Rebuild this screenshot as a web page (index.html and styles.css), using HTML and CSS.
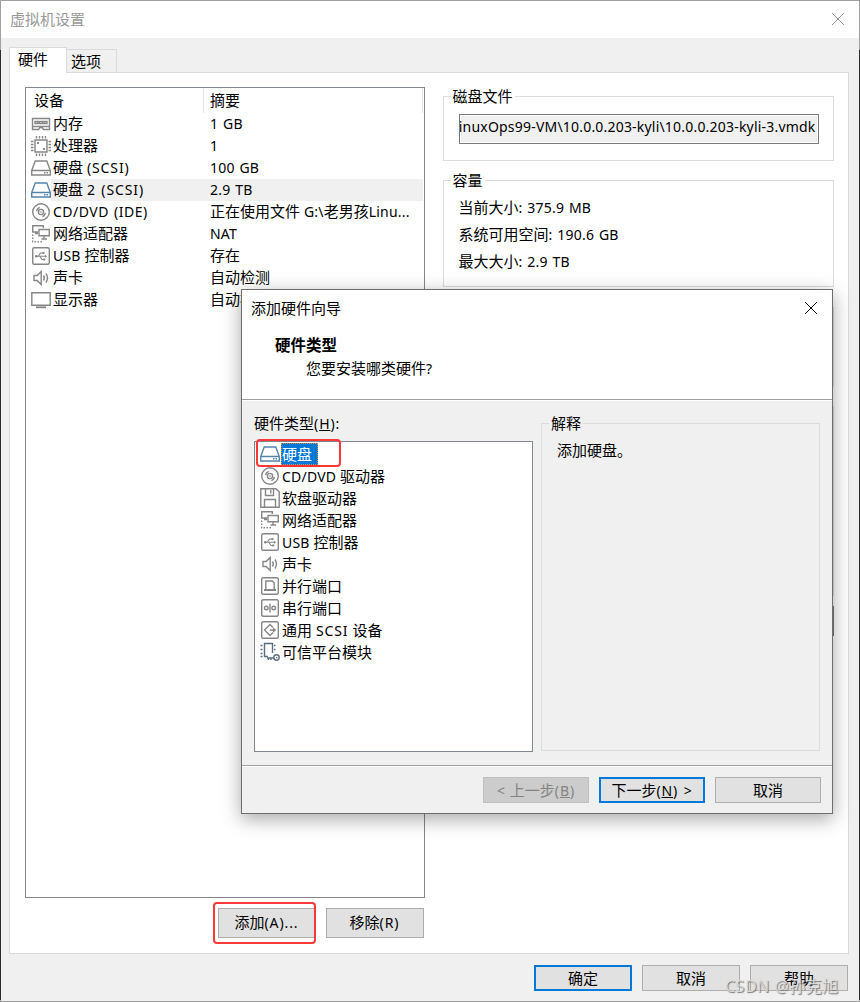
FILE: index.html
```
<!DOCTYPE html>
<html lang="zh-CN">

<head>
    <meta charset="UTF-8">
    <meta name="viewport" content="width=device-width, initial-scale=1.0">
    <title>虚拟机设置</title>
    <link rel="stylesheet" href="styles.css">
</head>

<body>
    <!-- icons used by both lists -->
    <svg class="sprite">
        <symbol id="memory" viewBox="0 0 20 20">
            <path d="M1 4.500h18M1 15.500h6.500l1.500-2h2l1.500 2H19M1 12.500h18M1.500 4v12M18.500 4v12" />
            <path d="M4 7.500h3v2H4zM8.500 7.500h3v2h-3zM13 7.500h3v2h-3z" />
        </symbol>
        <symbol id="cpu" viewBox="0 0 20 20">
            <path d="M4 4h12v12H4z" />
            <path d="M5.500 0v2.500M8.500 0v2.500M11.500 0v2.500M14.500 0v2.500M5.500 17.500V20M8.500 17.500V20M11.500 17.500V20M14.500 17.500V20M0 5.500h2.500M0 8.500h2.500M0 11.500h2.500M0 14.500h2.500M17.500 5.500H20M17.500 8.500H20M17.500 11.500H20M17.500 14.500H20" />
            <path class="fill" d="M6 6h2v2H6zM12 12h2v2h-2z" />
        </symbol>
        <symbol id="disk" viewBox="0 0 20 20">
            <path d="M4.200 3h11.600l3.500 9.500V17H.7v-4.500zM1 12.500h18" />
            <path class="fill" d="M13 14h1.500v1.500H13zM15.500 14H17v1.500h-1.500z" />
        </symbol>
        <symbol id="cd" viewBox="0 0 20 20">
            <circle cx="10" cy="10" r="8.300" />
            <circle cx="10" cy="10" r="2.600" />
            <path d="M5.500 9q.7-2.700 3.200-3.700M14.500 11q-.7 2.700-3.200 3.700" />
            <circle class="fill" cx="10" cy="10" r=".8" />
        </symbol>
        <symbol id="net" viewBox="0 0 20 20">
            <path d="M7 8H1.700V1.700h10.600V4M4 9.500h3M8 5.500h10.300v6.300H8zM13 12v2.500M10.500 15h5.500" />
            <path stroke-dasharray="1.500 1.500" d="M1.700 10.500v7.200H12" />
        </symbol>
        <symbol id="usb" viewBox="0 0 20 20">
            <rect x="1.700" y="1.700" width="16.600" height="16.600" rx="1.500" />
            <path stroke-width="1.100" d="M5 10.200h10M7.500 10l2-3H12M9 10.500l2 3h2" />
            <circle class="fill" cx="5.300" cy="10.200" r="1.300" />
            <path class="fill" d="M11.500 6h2v2h-2zM12.300 12.500h2v2h-2zM14 8.700l2.300 1.500-2.300 1.500z" />
        </symbol>
        <symbol id="sound" viewBox="0 0 20 20">
            <path d="M3 7.500h3.200l4-4v13l-4-4H3z" />
            <path d="M12.500 7.500q1.700 2.500 0 5M15 5.500q3 4.500 0 9" />
        </symbol>
        <symbol id="monitor" viewBox="0 0 20 20">
            <path d="M.8 2.800h18.400v12.400H.8z" />
            <path stroke-width="1.800" d="M5 17.300h10" />
        </symbol>
        <symbol id="floppy" viewBox="0 0 20 20">
            <path d="M.8.8H16l3.200 3v15.400H.8zM5.500 1v6.500h8V1M4.500 19v-7.500h11V19" />
            <path d="M10.800 2v3.500" />
        </symbol>
        <symbol id="parallel" viewBox="0 0 20 20">
            <rect x="1.700" y="1.700" width="16.600" height="16.600" rx="1.500" />
            <path d="M5.800 13V5h6.400l2 2v6" />
            <path stroke-width="2" d="M4 14h12" />
        </symbol>
        <symbol id="serial" viewBox="0 0 20 20">
            <rect x="1.700" y="1.700" width="16.600" height="16.600" rx="1.500" />
            <circle cx="6.300" cy="10" r="1.800" />
            <circle cx="13.700" cy="10" r="1.800" />
            <path d="M10 5.500v9" />
        </symbol>
        <symbol id="scsi" viewBox="0 0 20 20">
            <rect x="1.700" y="1.700" width="16.600" height="16.600" rx="1.500" />
            <path d="M13 7.500l-3-3L4.500 10l5.500 5.500 3-3M10 10h5" />
            <path class="fill" d="M13 7.200l3.300 2.800-3.300 2.800z" />
        </symbol>
        <symbol id="tpm" viewBox="0 0 20 20">
            <path d="M8 14.500H4.500V1.500h8V11M.5 3.500h2M.5 7.500h2M.5 11.500h2M.5 14.500h2M14 3.500h1.500M14 7.500h1.500" />
            <path d="M7 16h7M8.500 16v2M11 16v2" />
            <circle cx="16.500" cy="15.500" r="2.700" />
            <circle class="fill" cx="16.800" cy="15.500" r=".8" />
        </symbol>
    </svg>

    <div class="window">
        <div class="titlebar">
            <span>虚拟机设置</span>
            <svg class="close" viewBox="0 0 14 14"><path d="M1 1l12 12M13 1L1 13" /></svg>
        </div>
        <div class="content">
            <div class="tabs">
                <div class="tab active">硬件</div>
                <div class="tab">选项</div>
            </div>
            <div class="panel">
                <div class="left">
                    <div class="devices">
                        <div class="head">
                            <div class="name">设备</div>
                            <div class="info">摘要</div>
                        </div>
                        <div class="row">
                            <svg class="icon"><use href="#memory" /></svg>
                            <div class="name">内存</div>
                            <div class="info"><span class="en">1 GB</span></div>
                        </div>
                        <div class="row">
                            <svg class="icon"><use href="#cpu" /></svg>
                            <div class="name">处理器</div>
                            <div class="info"><span class="en">1</span></div>
                        </div>
                        <div class="row">
                            <svg class="icon"><use href="#disk" /></svg>
                            <div class="name">硬盘 <span class="en wide">(SCSI)</span></div>
                            <div class="info"><span class="en">100 GB</span></div>
                        </div>
                        <div class="row current">
                            <svg class="icon blue"><use href="#disk" /></svg>
                            <div class="name">硬盘 <span class="en wide">2 (SCSI)</span></div>
                            <div class="info"><span class="en">2.9 TB</span></div>
                        </div>
                        <div class="row">
                            <svg class="icon"><use href="#cd" /></svg>
                            <div class="name"><span class="en device">CD/DVD (IDE)</span></div>
                            <div class="info">正在使用文件 <span class="en">G:\</span>老男孩<span class="en">Linu...</span></div>
                        </div>
                        <div class="row">
                            <svg class="icon"><use href="#net" /></svg>
                            <div class="name">网络适配器</div>
                            <div class="info"><span class="en">NAT</span></div>
                        </div>
                        <div class="row">
                            <svg class="icon"><use href="#usb" /></svg>
                            <div class="name"><span class="en">USB</span> 控制器</div>
                            <div class="info">存在</div>
                        </div>
                        <div class="row">
                            <svg class="icon"><use href="#sound" /></svg>
                            <div class="name">声卡</div>
                            <div class="info">自动检测</div>
                        </div>
                        <div class="row">
                            <svg class="icon"><use href="#monitor" /></svg>
                            <div class="name">显示器</div>
                            <div class="info">自动检测</div>
                        </div>
                    </div>
                    <div class="listButtons">
                        <button class="btn marked">添加<span class="en wide">(A)...</span></button>
                        <button class="btn">移除<span class="en wide">(R)</span></button>
                    </div>
                </div>
                <div class="right">
                    <div class="group file">
                        <div class="legend">磁盘文件</div>
                        <div class="path"><span class="en">LinuxOps99-VM\10.0.0.203-kyli\10.0.0.203-kyli-3.vmdk</span></div>
                    </div>
                    <div class="group capacity">
                        <div class="legend">容量</div>
                        <p>当前大小<span class="en">: 375.9 MB</span></p>
                        <p>系统可用空间<span class="en">: 190.6 GB</span></p>
                        <p>最大大小<span class="en">: 2.9 TB</span></p>
                    </div>
                    <div class="group diskInfo"></div>
                    <div class="group tools"></div>
                    <button class="btn advanced"></button>
                </div>
            </div>
            <div class="footer">
                <button class="btn primary">确定</button>
                <button class="btn">取消</button>
                <button class="btn">帮助</button>
            </div>
        </div>
    </div>

    <div class="wizard">
        <div class="wizardTop">
            <div class="wizardTitle">
                <span>添加硬件向导</span>
                <svg class="close" viewBox="0 0 14 14"><path d="M1 1l12 12M13 1L1 13" /></svg>
            </div>
            <h1>硬件类型</h1>
            <p>您要安装哪类硬件<span class="en">?</span></p>
        </div>
        <div class="wizardBody">
            <div class="types">
                <div class="label">硬件类型<span class="en wide">(<u>H</u>):</span></div>
                <div class="typeList">
                    <div class="type marked">
                        <svg class="icon blue"><use href="#disk" /></svg>
                        <span class="selected">硬盘</span>
                    </div>
                    <div class="type"><svg class="icon"><use href="#cd" /></svg><span><span class="en">CD/DVD</span> 驱动器</span></div>
                    <div class="type"><svg class="icon"><use href="#floppy" /></svg><span>软盘驱动器</span></div>
                    <div class="type"><svg class="icon"><use href="#net" /></svg><span>网络适配器</span></div>
                    <div class="type"><svg class="icon"><use href="#usb" /></svg><span><span class="en">USB</span> 控制器</span></div>
                    <div class="type"><svg class="icon"><use href="#sound" /></svg><span>声卡</span></div>
                    <div class="type"><svg class="icon"><use href="#parallel" /></svg><span>并行端口</span></div>
                    <div class="type"><svg class="icon"><use href="#serial" /></svg><span>串行端口</span></div>
                    <div class="type"><svg class="icon"><use href="#scsi" /></svg><span>通用 <span class="en wide">SCSI</span> 设备</span></div>
                    <div class="type"><svg class="icon slate"><use href="#tpm" /></svg><span>可信平台模块</span></div>
                </div>
            </div>
            <div class="group explain">
                <div class="legend">解释</div>
                <p>添加硬盘。</p>
            </div>
        </div>
        <div class="wizardFooter">
            <button class="btn" disabled><span class="en wide">&lt;</span> 上一步<span class="en wide">(<u>B</u>)</span></button>
            <button class="btn primary">下一步<span class="en wide">(<u>N</u>) &gt;</span></button>
            <button class="btn">取消</button>
        </div>
    </div>

    <div class="watermark">CSDN @孙克旭</div>
</body>

</html>
```
FILE: styles.css
```
*,
*::after {
    box-sizing: border-box;
}

body {
    margin: 0;
    width: 860px;
    height: 1002px;
    overflow: hidden;
    position: relative;
    padding: 1px;
    background: linear-gradient(#a0a0a0 50px, #2b2b2f 50px, #2b2b2f 1000px, #a0a0a0 1000px);
    font-family: "Noto Sans", "Noto Sans CJK SC", sans-serif;
    font-size: 15px;
    line-height: 22px;
    color: #000;
    white-space: nowrap;
}

p,
h1 {
    margin: 0;
}

.en {
    font-size: 14px;
    letter-spacing: .2px;
    word-spacing: 1px;
}

.en.wide {
    letter-spacing: .9px;
}

.en.device {
    letter-spacing: .5px;
}

.sprite {
    position: absolute;
    width: 0;
    height: 0;
}

.icon {
    width: 20px;
    height: 20px;
    flex: none;
    color: #868686;
    fill: none;
    stroke: currentColor;
    stroke-width: 1.4;
}

.icon.blue {
    color: #5584ad;
}

.icon.slate {
    color: #5b6e80;
}

.fill {
    fill: currentColor;
    stroke: none;
}

.close {
    width: 14px;
    height: 14px;
    fill: none;
    stroke: currentColor;
}

.window {
    height: 1000px;
    background-color: #f0f0f0;
}

.titlebar {
    height: 37px;
    padding: 0 14px 2px 9px;
    display: flex;
    align-items: center;
    justify-content: space-between;
    background-color: #fff;
    color: #999;
}

.content {
    padding: 9px 10px 0 8px;
}

.tabs {
    display: flex;
    align-items: flex-end;
    height: 25px;
}

.tab {
    width: 50px;
    height: 23px;
    padding-left: 4px;
    border: 1px solid #dadada;
    border-width: 1px 1px 0 0;
}

.tab.active {
    width: 58px;
    height: 26px;
    margin-bottom: -1px;
    padding-left: 8px;
    border-left-width: 1px;
    background-color: #fff;
    z-index: 1;
}

.panel {
    width: 840px;
    height: 882px;
    display: flex;
    gap: 18px;
    padding: 14px 14px 0 15px;
    border: 1px solid #dadada;
    background-color: #fff;
}

.left {
    width: 400px;
}

.devices {
    height: 811px;
    border: 1px solid #828790;
}

.head,
.row {
    display: flex;
    margin-right: 1px;
}

.head {
    height: 25px;
    line-height: 25px;
    border-right: 1px solid #e5e5e5;
}

.head .name {
    width: 178px;
    padding-left: 8px;
    border-right: 1px solid #e5e5e5;
}

.row {
    height: 22px;
    align-items: center;
    padding-left: 5px;
    line-height: 20px;
}

.row .name,
.row .info {
    height: 22px;
}

.row .name {
    width: 153px;
    padding-left: 2px;
}

.info {
    padding-left: 6px;
    flex: 1;
}

.row.current .name,
.row.current .info {
    background-color: #f0f0f0;
}

.listButtons {
    display: flex;
    justify-content: flex-end;
    gap: 10px;
    margin: 10px 1px 0 0;
}

.btn {
    position: relative;
    width: 98px;
    height: 26px;
    padding: 0;
    border: 1px solid #adadad;
    background-color: #e1e1e1;
    font: inherit;
    line-height: 22px;
    color: #000;
}

.listButtons .btn {
    height: 30px;
    padding-bottom: 2px;
}

.btn.primary {
    border: 2px solid #0078d7;
}

.btn:disabled {
    border-color: #bfbfbf;
    background-color: #ccc;
    color: #838383;
}

/* red frames drawn over the button and the list item */
.marked::after {
    content: "";
    position: absolute;
    border: 2px solid #fb3838;
    border-radius: 4px;
}

.btn.marked::after {
    left: -6px;
    top: -7px;
    width: 103px;
    height: 42px;
}

.right {
    width: 392px;
    padding-top: 9px;
}

.group {
    border: 1px solid #dcdcdc;
}

.legend {
    width: fit-content;
    height: 22px;
    margin: -12px 0 0 7px;
    padding: 0 2px;
    background-color: #fff;
}

.file {
    height: 65px;
    margin-bottom: 19px;
}

.path {
    width: 360px;
    height: 30px;
    margin: 7px 0 0 15px;
    padding-right: 2px;
    display: flex;
    justify-content: flex-end;
    overflow: hidden;
    border: 1px solid #7a7a7a;
    box-shadow: inset 0 0 0 1px #fff;
    background-color: #f0f0f0;
    line-height: 24px;
}

.capacity {
    height: 107px;
    margin-bottom: 20px;
}

.capacity p {
    height: 27px;
    padding-left: 15px;
    line-height: 27px;
}

.capacity .legend {
    margin-bottom: 3px;
}

.diskInfo {
    height: 80px;
    margin-bottom: 19px;
}

.tools {
    height: 190px;
}

.advanced {
    display: block;
    height: 30px;
    margin: 10px 0 0 auto;
    border-color: #7a7a7a;
}

.footer {
    display: flex;
    justify-content: flex-end;
    gap: 10px;
    padding: 11px 1px 0 0;
}

.wizard {
    position: absolute;
    left: 241px;
    top: 289px;
    width: 592px;
    height: 525px;
    border: 1px solid #6e6e6e;
    background-color: #f0f0f0;
    box-shadow: 0 5px 18px rgba(0, 0, 0, .35);
}

.wizardTop {
    height: 110px;
    border-bottom: 1px solid #a0a0a0;
    background-color: #fff;
}

.wizardTitle {
    height: 36px;
    padding: 0 14px 0 9px;
    display: flex;
    align-items: center;
    justify-content: space-between;
}

.wizardTop h1 {
    margin-top: 8px;
    padding-left: 33px;
    font-size: 15.500px;
    line-height: 22px;
}

.wizardTop p {
    padding-left: 64px;
    line-height: 24px;
}

.wizardBody {
    height: 366px;
    display: flex;
    gap: 8px;
    padding: 11px 12px 0;
    border-top: 1px solid #fff;
    border-bottom: 1px solid #a0a0a0;
}

.types {
    width: 279px;
}

.label {
    height: 29px;
}

.typeList {
    height: 311px;
    padding: 1px 0 0 5px;
    border: 1px solid #828790;
    background-color: #fff;
}

.type {
    position: relative;
    height: 22px;
    display: flex;
    align-items: center;
    gap: 2px;
}

.selected {
    height: 22px;
    margin-left: -1px;
    padding: 0 5px 0 0;
    border: 1px dotted #e08a3c;
    background-color: #0078d7;
    color: #fff;
    line-height: 20px;
}

.type.marked::after {
    left: -4px;
    top: -4px;
    width: 85px;
    height: 28px;
}

.explain {
    width: 279px;
    height: 328px;
    margin-top: 11px;
}

.explain .legend {
    background-color: #f0f0f0;
}

.explain p {
    padding: 5px 0 0 15px;
}

.wizardFooter {
    display: flex;
    justify-content: flex-end;
    gap: 10px;
    padding: 10px 11px 0;
    border-top: 1px solid #fff;
}

.wizardFooter .btn {
    width: 106px;
}

.watermark {
    position: absolute;
    left: 725px;
    top: 975px;
    font-size: 16px;
    letter-spacing: .5px;
    color: rgba(225, 225, 225, .85);
    text-shadow: 1px 1px 1px #777;
}
```
